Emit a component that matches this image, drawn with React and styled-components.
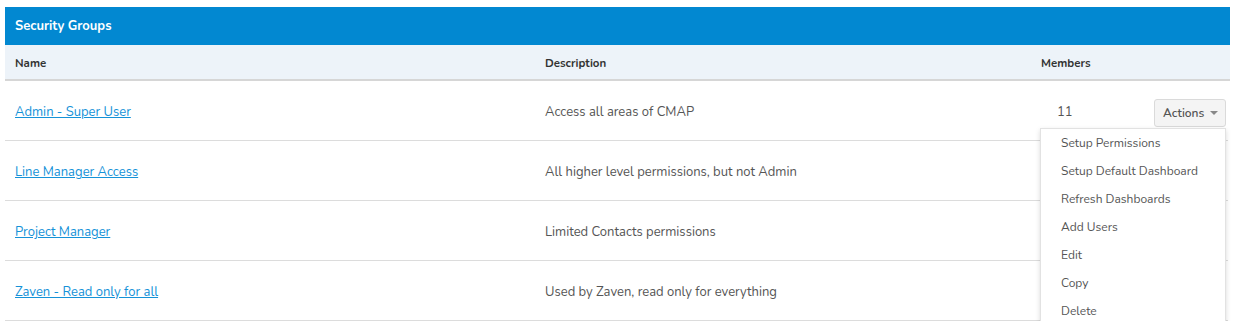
import React from "react";
import styled, { createGlobalStyle } from "styled-components";

const GlobalStyle = createGlobalStyle`
  body {
    margin: 0;
    background: #fff;
    font-family: "Nunito", Lato, "Open Sans", sans-serif;
  }
`;

const Page = styled.div`
  padding: 7px 6px 0 5px;
`;

const Panel = styled.div`
  width: 1225px;
`;

const PanelTitle = styled.div`
  background-color: #0288d1;
  color: #fff;
  font-size: 13px;
  font-weight: 700;
  height: 38px;
  display: flex;
  align-items: center;
  padding-left: 10px;
`;

const Row = styled.div`
  display: grid;
  grid-template-columns: 530px 496px 1fr;
  align-items: center;
  height: ${(p) => (p.head ? "34px" : "59px")};
  background-color: ${(p) => (p.head ? "#edf3f9" : "#fff")};
  border-bottom: ${(p) => (p.head ? "2px solid #d6d6d6" : "1px solid #dcdcdc")};
  margin-right: ${(p) => (p.head ? "0" : "2px")};
`;

const HeadCell = styled.div`
  font-size: 11.5px;
  font-weight: 700;
  color: #333;
  padding-left: 10px;
  padding-top: 1px;
`;

const Cell = styled.div`
  font-size: 13px;
  color: #555;
  padding-left: 10px;
  padding-top: 3px;
`;

const GroupLink = styled.a`
  color: #1592d8;
  text-decoration: underline;
  font-size: 13px;
  cursor: pointer;
`;

const MembersCell = styled.div`
  display: flex;
  align-items: center;
  padding-left: 26px;
  padding-right: 2px;
  padding-top: 5px;
  font-size: 13px;
  color: #555;
`;

const Count = styled.span`
  flex: 1;
  margin-top: -2px;
`;

const Dropdown = styled.div`
  position: relative;
`;

const ActionsButton = styled.button`
  display: flex;
  align-items: center;
  gap: 6px;
  height: 28px;
  width: 72px;
  padding: 0 0 0 8px;
  background: #f4f4f4;
  border: 1px solid #dadada;
  border-radius: 3px;
  font-family: inherit;
  font-size: 12px;
  font-weight: 600;
  color: #555;
`;

const Caret = styled.span`
  width: 0;
  height: 0;
  border-left: 4px solid transparent;
  border-right: 4px solid transparent;
  border-top: 4px solid #888;
`;

const Menu = styled.ul`
  position: absolute;
  top: calc(100% + 1px);
  right: 0;
  width: 184px;
  margin: 0;
  padding: 0;
  list-style: none;
  background: #fff;
  border: 1px solid #e2e2e2;
  box-shadow: 0 2px 5px rgba(0, 0, 0, 0.15);
  z-index: 5;
`;

const MenuItem = styled.li`
  height: 28px;
  line-height: 28px;
  padding-left: 20px;
  font-size: 12px;
  color: #555;
`;

const groups = [
  { name: "Admin - Super User", description: "Access all areas of CMAP", members: 11 },
  { name: "Line Manager Access", description: "All higher level permissions, but not Admin" },
  { name: "Project Manager", description: "Limited Contacts permissions" },
  { name: "Zaven - Read only for all", description: "Used by Zaven, read only for everything" },
];

const menuItems = [
  "Setup Permissions",
  "Setup Default Dashboard",
  "Refresh Dashboards",
  "Add Users",
  "Edit",
  "Copy",
  "Delete",
];

export default function App() {
  return (
    <Page>
      <GlobalStyle />
      <Panel>
        <PanelTitle>Security Groups</PanelTitle>
        <Row head>
          <HeadCell>Name</HeadCell>
          <HeadCell>Description</HeadCell>
          <HeadCell>Members</HeadCell>
        </Row>
        {groups.map((g, i) => (
          <Row key={g.name}>
            <Cell>
              <GroupLink>{g.name}</GroupLink>
            </Cell>
            <Cell>{g.description}</Cell>
            <MembersCell>
              <Count>{g.members}</Count>
              {i === 0 && (
                <Dropdown>
                  <ActionsButton>
                    Actions <Caret />
                  </ActionsButton>
                  <Menu>
                    {menuItems.map((m) => (
                      <MenuItem key={m}>{m}</MenuItem>
                    ))}
                  </Menu>
                </Dropdown>
              )}
            </MembersCell>
          </Row>
        ))}
      </Panel>
    </Page>
  );
}
